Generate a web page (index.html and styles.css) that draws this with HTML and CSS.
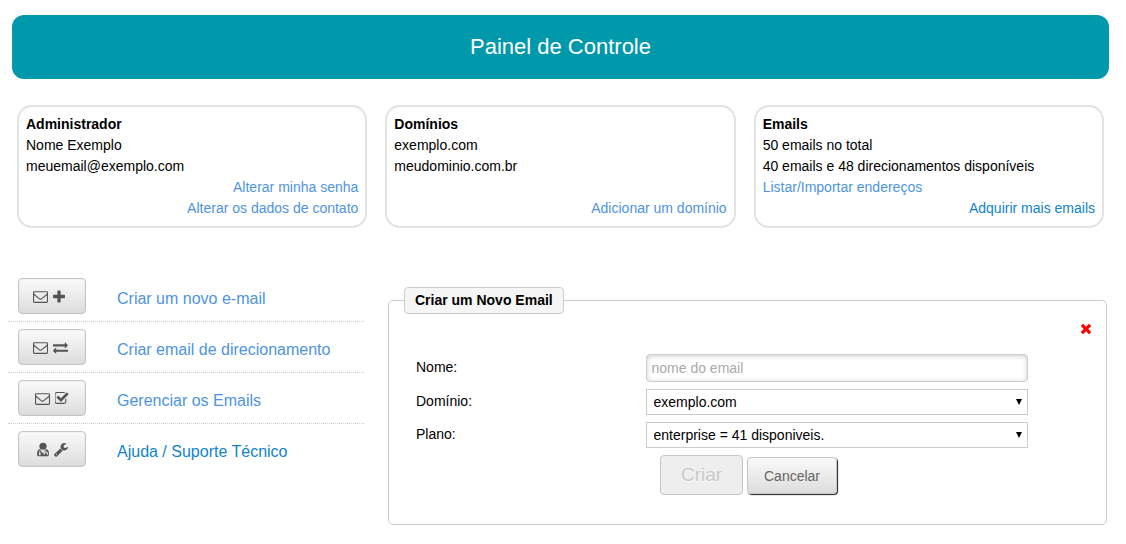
FILE: index.html
```html
<!DOCTYPE html>
<html lang="pt-BR">
<head>
  <meta charset="UTF-8">
  <meta name="viewport" content="width=device-width, initial-scale=1.0">
  <title>Painel de Controle</title>
  <link rel="stylesheet" href="styles.css">
</head>
<body>
  <svg class="sprite" aria-hidden="true">
    <symbol id="envelope" viewBox="0 0 1792 1792"><path d="M1664 1504v-768q-32 36-69 66-268 206-426 338-51 43-83 67t-86.500 48.500-102.500 24.500h-2q-48 0-102.500-24.500t-86.500-48.500-83-67q-158-132-426-338-37-30-69-66v768q0 13 9.500 22.500t22.500 9.500h1472q13 0 22.500-9.500t9.500-22.500zm0-1051v-24.500l-.5-13-3-12.500-5.500-9-9-7.500-14-2.500h-1472q-13 0-22.500 9.500t-9.500 22.500q0 168 147 284 193 152 401 317 6 5 35 29.500t46 37.500 44.500 31.500 50.500 27.500 43 9h2q20 0 43-9t50.500-27.500 44.500-31.500 46-37.500 35-29.500q208-165 401-317 54-43 100.500-115.500t46.500-131.500zm128-37v1088q0 66-47 113t-113 47h-1472q-66 0-113-47t-47-113v-1088q0-66 47-113t113-47h1472q66 0 113 47t47 113z"/></symbol>
    <symbol id="plus" viewBox="192 128 1408 1408"><path d="M1600 736v192q0 40-28 68t-68 28h-416v416q0 40-28 68t-68 28h-192q-40 0-68-28t-28-68v-416h-416q-40 0-68-28t-28-68v-192q0-40 28-68t68-28h416v-416q0-40 28-68t68-28h192q40 0 68 28t28 68v416h416q40 0 68 28t28 68z"/></symbol>
    <symbol id="exchange" viewBox="0 0 1792 1792"><path d="M1792 1184v192q0 13-9.500 22.500t-22.500 9.500h-1376v192q0 13-9.500 22.500t-22.500 9.500q-12 0-24-10l-319-320q-9-9-9-22 0-14 9-23l320-320q9-9 23-9 13 0 22.500 9.500t9.500 22.500v192h1376q13 0 22.500 9.500t9.500 22.500zm0-544q0 14-9 23l-320 320q-9 9-23 9-13 0-22.500-9.500t-9.500-22.500v-192h-1376q-13 0-22.500-9.500t-9.500-22.500v-192q0-13 9.500-22.500t22.500-9.500h1376v-192q0-14 9-23t23-9q12 0 24 10l319 319q9 9 9 23z"/></symbol>
    <symbol id="check" viewBox="128 64 1664 1664"><path d="M1472 930v318q0 119-84.500 203.500t-203.500 84.500h-832q-119 0-203.500-84.500t-84.500-203.500v-832q0-119 84.500-203.500t203.500-84.500h832q63 0 117 25 15 7 18 23 3 17-9 29l-49 49q-10 10-23 10-3 0-9-2-23-6-45-6h-832q-66 0-113 47t-47 113v832q0 66 47 113t113 47h832q66 0 113-47t47-113v-254q0-13 9-22l64-64q10-10 23-10 6 0 12 3 20 8 20 29zm231-489l-814 814q-24 24-57 24t-57-24l-430-430q-24-24-24-57t24-57l110-110q24-24 57-24t57 24l263 263 647-647q24-24 57-24t57 24l110 110q24 24 24 57t-24 57z"/></symbol>
    <symbol id="wrench" viewBox="64 64 1664 1664"><path d="M448 1472q0-26-19-45t-45-19-45 19-19 45 19 45 45 19 45-19 19-45zm644-420l-682 682q-37 37-90 37-52 0-91-37l-106-108q-38-36-38-90 0-53 38-91l681-681q39 98 114.500 173.500t173.500 114.500zm634-435q0 39-23 106-47 134-164.500 217.500t-258.500 83.500q-185 0-316.500-131.500t-131.500-316.500 131.500-316.500 316.500-131.500q58 0 121.500 16.500t107.500 46.500q16 11 16 28t-16 28l-293 169v224l193 107q5-3 79-48.500t135.500-81 70.500-35.500q15 0 23.500 10t8.500 25z"/></symbol>
    <symbol id="doctor" viewBox="0 0 11 13">
      <circle cx="5.500" cy="3.500" r="3.300"/>
      <path fill-rule="evenodd" d="M2.400 6Q5.500 8.800 8.600 6Q11 7 11 10.800Q11 12.800 9 12.800H2Q0 12.800 0 10.800Q0 7 2.400 6ZM2.200 7.400V9.700A1 1 0 1 0 2.900 9.700V7.500L5.500 10L7.800 7.500V8.700A1.700 1.700 0 0 0 6.300 11.400H7Q7 9.400 8.100 9.400T9.200 11.400H9.900A1.700 1.700 0 0 0 8.500 8.700V7.400Z"/>
    </symbol>
    <symbol id="times" viewBox="302 366 1188 1188"><path d="M1490 1322q0 40-28 68l-136 136q-28 28-68 28t-68-28l-294-294-294 294q-28 28-68 28t-68-28l-136-136q-28-28-28-68t28-68l294-294-294-294q-28-28-28-68t28-68l136-136q28-28 68-28t68 28l294 294 294-294q28-28 68-28t68 28l136 136q28 28 28 68t-28 68l-294 294 294 294q28 28 28 68z"/></symbol>
  </svg>

  <header class="header">
    <h1>Painel de Controle</h1>
  </header>

  <section class="cards">
    <div class="card">
      <h2>Administrador</h2>
      <p>Nome Exemplo</p>
      <p>meuemail@exemplo.com</p>
      <a class="right" href="#">Alterar minha senha</a>
      <a class="right" href="#">Alterar os dados de contato</a>
    </div>
    <div class="card">
      <h2>Domínios</h2>
      <p>exemplo.com</p>
      <p>meudominio.com.br</p>
      <a class="right bottom" href="#">Adicionar um domínio</a>
    </div>
    <div class="card">
      <h2>Emails</h2>
      <p>50 emails no total</p>
      <p>40 emails e 48 direcionamentos disponíveis</p>
      <a href="#">Listar/Importar endereços</a>
      <a class="right dark" href="#">Adquirir mais emails</a>
    </div>
  </section>

  <main class="main">
    <ul class="menu">
      <li>
        <button class="btn wide" type="button" aria-label="Criar um novo e-mail">
          <svg class="icon"><use href="#envelope"/></svg>
          <svg class="icon narrow"><use href="#plus"/></svg>
        </button>
        <a href="#">Criar um novo e-mail</a>
      </li>
      <li>
        <button class="btn wide" type="button" aria-label="Criar email de direcionamento">
          <svg class="icon"><use href="#envelope"/></svg>
          <svg class="icon"><use href="#exchange"/></svg>
        </button>
        <a href="#">Criar email de direcionamento</a>
      </li>
      <li>
        <button class="btn" type="button" aria-label="Gerenciar os Emails">
          <svg class="icon"><use href="#envelope"/></svg>
          <svg class="icon medium"><use href="#check"/></svg>
        </button>
        <a href="#">Gerenciar os Emails</a>
      </li>
      <li>
        <button class="btn" type="button" aria-label="Ajuda / Suporte Técnico">
          <svg class="icon narrow"><use href="#doctor"/></svg>
          <svg class="icon medium"><use href="#wrench"/></svg>
        </button>
        <a class="dark" href="#">Ajuda / Suporte Técnico</a>
      </li>
    </ul>

    <form class="form">
      <fieldset>
        <legend>Criar um Novo Email</legend>
        <button class="close" type="button" aria-label="Fechar">
          <svg><use href="#times"/></svg>
        </button>
        <div class="row">
          <label for="nome">Nome:</label>
          <input id="nome" type="text" placeholder="nome do email">
        </div>
        <div class="row">
          <label for="dominio">Domínio:</label>
          <div class="select">
            <select id="dominio">
              <option>exemplo.com</option>
            </select>
          </div>
        </div>
        <div class="row">
          <label for="plano">Plano:</label>
          <div class="select">
            <select id="plano">
              <option>enterprise = 41 disponiveis.</option>
            </select>
          </div>
        </div>
        <div class="actions">
          <button class="btn create" type="submit" disabled>Criar</button>
          <button class="btn cancel" type="button">Cancelar</button>
        </div>
      </fieldset>
    </form>
  </main>
</body>
</html>
```
FILE: styles.css
```css
* {
  margin: 0;
  padding: 0;
  box-sizing: border-box;
}
body {
  padding: 15px 17px 16px 8px;
  font-family: "Liberation Sans", Arial, sans-serif;
  font-size: 14px;
  line-height: 21px;
  color: #000;
  background-color: #fff;
}
a {
  color: #4e94de;
  text-decoration: none;
}
a:hover {
  text-decoration: underline;
}
a.dark {
  color: #0f84cc;
}
.sprite {
  display: none;
}
.header {
  margin-left: 4px;
  padding: 20px;
  border-radius: 12px;
  text-align: center;
  color: #fff;
  background-color: #0099ab;
}
.header h1 {
  font-size: 22px;
  line-height: 24px;
  font-weight: 400;
}

/* cards */
.cards {
  display: grid;
  grid-template-columns: repeat(3, 1fr);
  gap: 18px;
  margin: 26px 5px 0 9px;
}
.card {
  display: flex;
  flex-direction: column;
  align-items: flex-start;
  padding: 7px;
  border: 2px solid #e2e2e2;
  border-radius: 15px;
}
.card h2 {
  font-size: 14px;
  font-weight: 700;
}
.card .right {
  align-self: flex-end;
}
.card .bottom {
  margin-top: auto;
}

/* menu */
.main {
  display: grid;
  grid-template-columns: 356px 1fr;
  align-items: start;
  gap: 24px;
  margin: 43px 2px 0 0;
}
.menu {
  list-style: none;
}
.menu li {
  display: flex;
  align-items: center;
  gap: 31px;
  padding: 7px 10px;
  border-bottom: 1px dotted #ccc;
  font-size: 16px;
}
.menu li:last-child {
  border-bottom: none;
}
.menu a {
  padding-top: 4px;
}
.btn {
  display: flex;
  align-items: center;
  justify-content: center;
  gap: 5px;
  border: 1px solid #c6c6c6;
  border-radius: 4px;
  font-family: inherit;
  font-size: 14px;
  color: #666;
  background: linear-gradient(#fafafa, #ddd);
  box-shadow: inset 0 0 1px #bbb;
  cursor: pointer;
}
.menu .btn {
  width: 68px;
  height: 36px;
}
.menu .wide {
  justify-content: flex-start;
  padding-left: 14px;
}
.icon {
  width: 15px;
  height: 15px;
  fill: #555;
}
.icon.medium {
  width: 14px;
}
.icon.narrow {
  width: 12px;
}

/* form */
.form {
  padding-top: 16px;
}
fieldset {
  padding: 0 15px 29px 27px;
  border: 1px solid #ccc;
  border-radius: 5px;
}
legend {
  margin-left: -12px;
  padding: 2px 10px;
  border: 1px solid #ccc;
  border-radius: 4px;
  font-weight: 700;
  background-color: #f5f5f5;
}
.close {
  display: block;
  margin: 10px 0 20px auto;
  border: none;
  line-height: 0;
  background: none;
  cursor: pointer;
}
.close svg {
  width: 10px;
  height: 10px;
  fill: #f00;
}
.row {
  display: grid;
  grid-template-columns: 3fr 5fr;
  align-items: center;
  margin: 0 63px 7px 0;
}
.row label {
  padding-bottom: 2px;
}
.row input,
.row select {
  width: 100%;
  height: 26px;
  padding: 0 7px;
  border: 1px solid #ccc;
  font-family: inherit;
  font-size: 14px;
  color: #000;
  background-color: #fff;
}
.row input {
  height: 28px;
  padding: 0 5px;
  border-radius: 4px;
  box-shadow: inset 0 1px 5px #ccc;
}
.row input::placeholder {
  color: #a9a9a9;
}
.row select {
  display: block;
  appearance: none;
}
.select {
  position: relative;
}
.select::after {
  content: "";
  position: absolute;
  top: 10px;
  right: 6px;
  border: 3px solid transparent;
  border-top: 6px solid #000;
  border-bottom: none;
  pointer-events: none;
}
.actions {
  display: flex;
  align-items: flex-end;
  gap: 4px;
  margin-left: 244px;
}
.create {
  width: 83px;
  height: 40px;
  font-size: 19px;
  color: #c8c8c8;
  background: #eee;
  box-shadow: none;
  text-shadow: 0 1px #fff;
}
.cancel {
  height: 37px;
  margin-bottom: 1px;
  padding: 0 16px;
  box-shadow: 1px 1px 1px #222;
}
```
